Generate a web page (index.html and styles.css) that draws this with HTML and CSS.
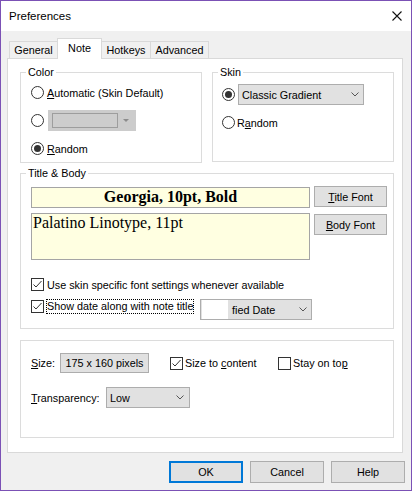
FILE: index.html
```html
<!DOCTYPE html>
<html>
<head>
<meta charset="utf-8">
<link rel="stylesheet" href="styles.css">
</head>
<body>
<div class="window">
  <div class="titlebar">
    <span class="title">Preferences</span>
    <svg class="close" width="10" height="10" viewBox="0 0 10 10"><path d="M0.5 0.5 L9.5 9.5 M9.5 0.5 L0.5 9.5" stroke="#111" stroke-width="1.1" fill="none"/></svg>
  </div>
  <div class="client">
    <div class="tabs">
      <div class="tab t-general">General</div>
      <div class="tab active t-note">Note</div>
      <div class="tab t-hotkeys">Hotkeys</div>
      <div class="tab t-adv">Advanced</div>
    </div>
    <div class="pane">
      <div class="toprow">
        <div class="group color-group">
          <div class="legend">Color</div>
          <div class="opts color-opts">
            <div class="opt"><span class="radio"></span><span class="lbl"><u>A</u>utomatic (Skin Default)</span></div>
            <div class="opt"><span class="radio"></span><span class="ccombo"><span class="swatch"></span><span class="tri"></span></span></div>
            <div class="opt"><span class="radio on"></span><span class="lbl"><u>R</u>andom</span></div>
          </div>
        </div>
        <div class="group skin-group">
          <div class="legend">Skin</div>
          <div class="opts skin-opts">
            <div class="opt"><span class="radio on"></span><span class="combo skin-combo"><span>Classic Gradient</span><svg class="chev" width="8" height="5" viewBox="0 0 8 5"><polyline points="0.5,0.5 4,4 7.5,0.5" fill="none" stroke="#555" stroke-width="1"/></svg></span></div>
            <div class="opt"><span class="radio"></span><span class="lbl lbl-tight">R<u>a</u>ndom</span></div>
          </div>
        </div>
      </div>
      <div class="group tb-group">
        <div class="legend">Title &amp; Body</div>
        <div class="tbgrid">
          <div class="fontbox titlebox">Georgia, 10pt, Bold</div>
          <div class="btn small title-btn"><span><u>T</u>itle Font</span></div>
          <div class="fontbox bodybox">Palatino Linotype, 11pt</div>
          <div class="btn small body-btn"><span><u>B</u>ody Font</span></div>
        </div>
        <div class="cbrow cbrow-a"><span class="check on"><svg width="11" height="11" viewBox="0 0 11 11"><polyline points="1.5,5.5 4,8 9.5,2" fill="none" stroke="#333" stroke-width="1"/></svg></span><span class="lbl">Use skin specific font settings whenever available</span></div>
        <div class="cbrow cbrow-b">
          <div class="cbpart"><span class="check on"><svg width="11" height="11" viewBox="0 0 11 11"><polyline points="1.5,5.5 4,8 9.5,2" fill="none" stroke="#333" stroke-width="1"/></svg></span><span class="lbl focus">Show date along with note title</span></div>
          <span class="combo date-combo"><span class="dleft"><span class="blank"></span><span>fied Date</span></span><svg class="chev" width="8" height="5" viewBox="0 0 8 5"><polyline points="0.5,0.5 4,4 7.5,0.5" fill="none" stroke="#555" stroke-width="1"/></svg></span>
        </div>
      </div>
      <div class="group misc-group">
        <div class="mrow mrow-1">
          <span class="mlabel size-label"><u>S</u>ize:</span>
          <span class="sizebox">175 x 160 pixels</span>
          <div class="mcheck stc"><span class="check on"><svg width="11" height="11" viewBox="0 0 11 11"><polyline points="1.5,5.5 4,8 9.5,2" fill="none" stroke="#333" stroke-width="1"/></svg></span><span class="lbl">Size to <u>c</u>ontent</span></div>
          <div class="mcheck sot"><span class="check"></span><span class="lbl">Stay on to<u>p</u></span></div>
        </div>
        <div class="mrow mrow-2">
          <span class="mlabel tr-label"><u>T</u>ransparency:</span>
          <span class="combo tr-combo"><span>Low</span><svg class="chev" width="8" height="5" viewBox="0 0 8 5"><polyline points="0.5,0.5 4,4 7.5,0.5" fill="none" stroke="#555" stroke-width="1"/></svg></span>
        </div>
      </div>
    </div>
    <div class="buttons">
      <div class="btn dlg default">OK</div>
      <div class="btn dlg">Cancel</div>
      <div class="btn dlg">Help</div>
    </div>
  </div>
</div>
</body>
</html>
```
FILE: styles.css
```css
* { box-sizing: border-box; }
html, body { margin: 0; padding: 0; }
body {
  width: 412px;
  height: 491px;
  font-family: "Liberation Sans", Arial, sans-serif;
  font-size: 10.8px;
  color: #000;
  background: #fff;
  overflow: hidden;
}
u { text-decoration: underline; text-underline-offset: 1px; }

.window {
  width: 412px;
  height: 491px;
  border: 1px solid #7b51b5;
  background: #f0f0f0;
  display: flex;
  flex-direction: column;
}
.titlebar {
  height: 30px;
  flex: none;
  background: #fff;
  display: flex;
  align-items: center;
  justify-content: space-between;
  padding: 0 9px 0 8px;
}
.title { font-size: 11.5px; }
.close { display: block; }

.client {
  flex: 1;
  padding: 7px 0 0 6px;
  display: flex;
  flex-direction: column;
}

/* tabs */
.tabs {
  display: flex;
  align-items: flex-start;
  height: 20px;
  margin-left: 2px;
  position: relative;
  z-index: 1;
}
.tab {
  height: 17px;
  margin-top: 3px;
  border: 1px solid #d9d9d9;
  border-bottom: none;
  border-right: none;
  background: #f0f0f0;
  text-align: center;
  line-height: 16px;
}
.t-general { width: 48px; }
.t-note { width: 45px; }
.t-hotkeys { width: 48px; border-left: none; }
.t-adv { width: 59px; border-right: 1px solid #d9d9d9; }
.tab.active {
  height: 21px;
  margin-top: 0;
  background: #fff;
  border-right: 1px solid #d9d9d9;
  line-height: 19px;
}

/* pane */
.pane {
  width: 396px;
  height: 395px;
  flex: none;
  border: 1px solid #d9d9d9;
  background: #fff;
  padding: 13px 8px 0 12px;
  display: flex;
  flex-direction: column;
}
.toprow { display: flex; gap: 10px; }
.group { border: 1px solid #dcdcdc; }
.legend {
  width: max-content;
  height: 15px;
  line-height: 15px;
  margin: -8px 0 -7px 5px;
  padding: 0 2px;
  background: #fff;
}
.color-group { width: 182px; height: 91px; }
.skin-group { width: 182px; height: 90px; }

.opts { display: flex; flex-direction: column; gap: 7px; }
.color-opts { padding: 9px 0 0 10px; }
.skin-opts { padding: 11px 0 0 9px; }
.opt { height: 21px; display: flex; align-items: center; }

.radio {
  width: 13px;
  height: 13px;
  flex: none;
  border: 1px solid #333;
  border-radius: 50%;
  background: #fff;
  display: flex;
  align-items: center;
  justify-content: center;
}
.radio.on::after {
  content: "";
  width: 7px;
  height: 7px;
  border-radius: 50%;
  background: #333;
}
.opt .lbl { margin-left: 3px; }
.opt .lbl-tight { margin-left: 2px; }

.ccombo {
  width: 88px;
  height: 21px;
  margin-left: 4px;
  background: #cccccc;
  display: flex;
  align-items: center;
  padding-left: 4px;
}
.swatch {
  width: 66px;
  height: 15px;
  border: 1px solid #9d9d9d;
  background: #cdcdcd;
}
.tri {
  width: 0;
  height: 0;
  margin-left: 5px;
  border-left: 3px solid transparent;
  border-right: 3px solid transparent;
  border-top: 3px solid #8c8c8c;
}

.combo {
  height: 21px;
  border: 1px solid #adadad;
  background: #e1e1e1;
  display: flex;
  align-items: center;
  justify-content: space-between;
  padding: 0 4px 0 3px;
}
.chev { display: block; flex: none; }
.skin-combo { width: 126px; margin-left: 3px; }

/* title & body */
.tb-group { height: 156px; margin-top: 10px; }
.tbgrid {
  display: grid;
  grid-template-columns: 279px 73px;
  column-gap: 4px;
  row-gap: 5px;
  padding: 13px 0 0 10px;
  align-items: start;
}
.fontbox {
  border: 1px solid #a5a5a5;
  background: #ffffe1;
  font-family: "Liberation Serif", "Times New Roman", serif;
}
.titlebox {
  height: 21px;
  font-weight: bold;
  font-size: 16px;
  line-height: 18px;
  text-align: center;
}
.bodybox {
  height: 47px;
  font-size: 16px;
  line-height: 18px;
  padding: 0 1px;
}
.btn {
  border: 1px solid #adadad;
  background: #e1e1e1;
  display: flex;
  align-items: center;
  justify-content: center;
}
.btn.small { height: 21px; }
.title-btn { margin-top: -1px; }
.body-btn { margin-top: 1px; }

.check {
  width: 13px;
  height: 13px;
  flex: none;
  border: 1px solid #333;
  background: #fff;
  display: flex;
  align-items: center;
  justify-content: center;
}
.check svg { display: block; }
.cbrow { display: flex; padding-left: 10px; }
.cbrow .lbl { margin-left: 3px; }
.cbrow-a { height: 15px; margin-top: 17px; align-items: center; }
.cbrow-b { height: 21px; margin-top: 7px; align-items: flex-start; }
.cbpart {
  width: 169px;
  height: 15px;
  display: flex;
  align-items: center;
}
.focus {
  outline: 1px dotted #000;
  outline-offset: 0;
  line-height: 13px;
}
.date-combo { width: 112px; padding-left: 1px; }
.dleft { display: flex; align-items: center; }
.blank { width: 26px; height: 19px; background: #fff; margin-right: 4px; }

/* misc */
.misc-group { height: 98px; margin-top: 11px; padding: 12px 0 0 10px; }
.mrow { display: flex; align-items: center; }
.mrow-1 { height: 20px; }
.mrow-2 { height: 21px; margin-top: 14px; }
.size-label { width: 29px; }
.sizebox {
  width: 89px;
  height: 20px;
  border: 1px solid #adadad;
  background: #e1e1e1;
  display: flex;
  align-items: center;
  justify-content: center;
}
.mcheck { display: flex; align-items: center; }
.mcheck .lbl { margin-left: 2px; }
.stc { width: 108px; margin-left: 21px; }
.tr-label { width: 75px; }
.tr-combo { width: 84px; padding-right: 5px; }

/* dialog buttons */
.buttons {
  display: flex;
  justify-content: flex-end;
  gap: 7px;
  margin-top: 8px;
  padding-right: 6px;
}
.btn.dlg { width: 74px; height: 22px; }
.btn.default { border: 2px solid #0078d7; }
```
